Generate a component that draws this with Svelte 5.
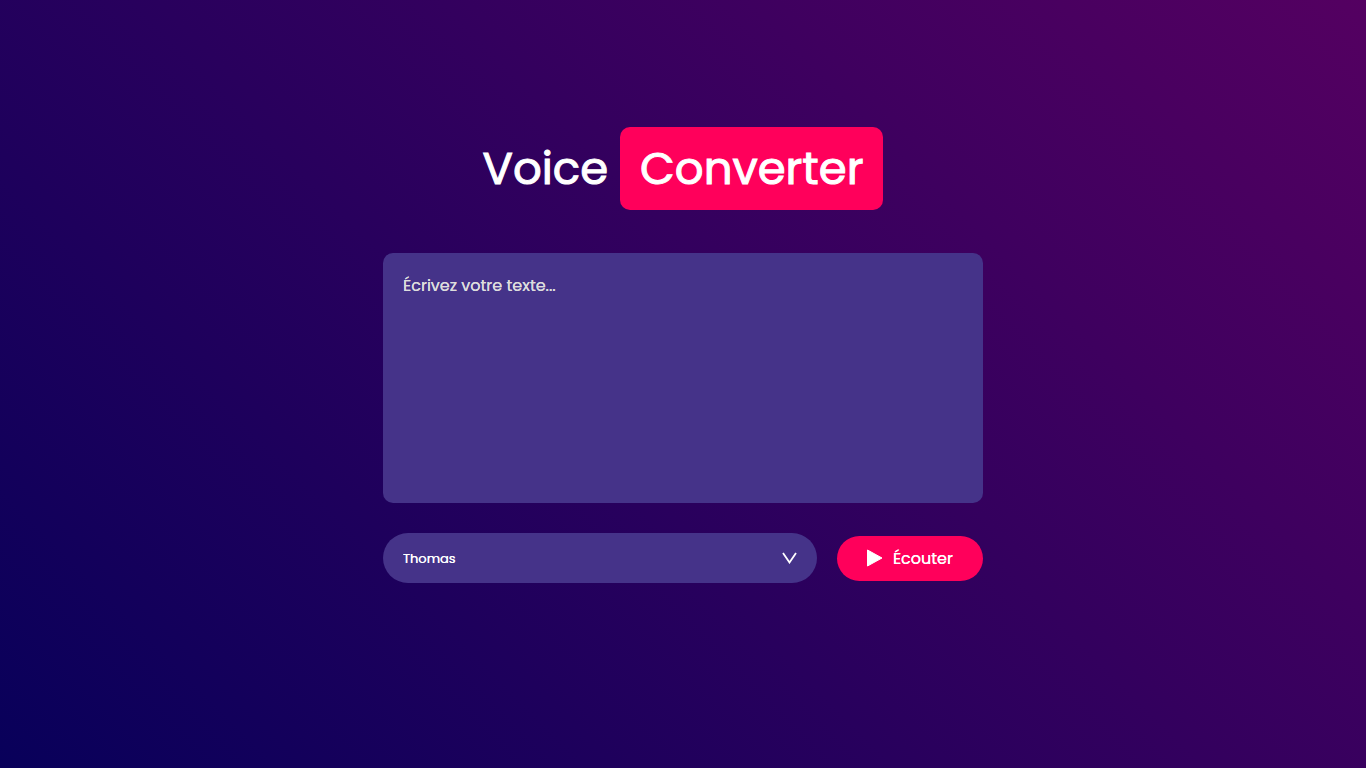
<script lang="ts">
  let text = $state('');
  let voice = $state('Thomas');
  const voices = ['Thomas', 'Amélie', 'Daniel'];

  function listen() {
    const speech = new SpeechSynthesisUtterance(text);
    speech.voice = speechSynthesis.getVoices().find((v) => v.name === voice) ?? null;
    speechSynthesis.speak(speech);
  }
</script>

<main class="hero">
  <h1>Voice <span>Converter</span></h1>
  <textarea aria-label="Texte" placeholder="Écrivez votre texte..." bind:value={text}></textarea>
  <div class="row">
    <div class="picker">
      <select aria-label="Voix" bind:value={voice}>
        {#each voices as name}
          <option>{name}</option>
        {/each}
      </select>
      <svg class="chevron" viewBox="0 0 15 12" aria-hidden="true">
        <path d="M1 1L7.5 10.5L14 1" />
      </svg>
    </div>
    <button type="button" onclick={listen}>
      <svg class="play" viewBox="0 0 16 18" aria-hidden="true">
        <path d="M0.5 1V17L15 9Z" />
      </svg>
      Écouter
    </button>
  </div>
</main>

<style>
  :global(body) {
    margin: 0;
  }

  .hero,
  .hero * {
    box-sizing: border-box;
    font-family: Poppins, Lato, sans-serif;
  }

  .hero {
    width: 100%;
    min-height: 100vh;
    padding: 20px 20px 78px;
    display: flex;
    flex-direction: column;
    align-items: center;
    justify-content: center;
    color: #fff;
    background: linear-gradient(45deg, #08005a, #540061);
  }

  h1 {
    margin: 0 0 43px;
    font-size: 45px;
    font-weight: 400;
    line-height: 67px;
    text-align: center;
    -webkit-text-stroke: 1px #fff;
  }

  h1 span {
    display: inline-block;
    padding: 8px 20px;
    border-radius: 10px;
    color: #fff;
    background: #ff005b;
  }

  textarea,
  select,
  button {
    text-shadow: 0 0 currentColor;
  }

  textarea {
    width: 100%;
    max-width: 600px;
    height: 250px;
    margin: 0 0 30px;
    padding: 20px;
    border: 0;
    outline: 0;
    border-radius: 10px;
    resize: none;
    color: #fff;
    font-size: 16px;
    line-height: 26px;
    background: #453389;
  }

  textarea::placeholder {
    color: #ddd;
  }

  .row {
    width: 100%;
    max-width: 600px;
    display: flex;
    align-items: center;
    gap: 20px;
  }

  .picker {
    flex: 1;
    display: grid;
    align-items: center;
  }

  select {
    grid-area: 1 / 1;
    width: 100%;
    height: 50px;
    padding: 0 20px;
    border: 0;
    outline: 0;
    border-radius: 50px;
    appearance: none;
    color: #fff;
    font-size: 13px;
    font-weight: 400;
    background: #453389;
  }

  .chevron {
    grid-area: 1 / 1;
    justify-self: end;
    width: 15px;
    height: 12px;
    margin-right: 20px;
    fill: none;
    stroke: #fff;
    stroke-width: 1.8;
    pointer-events: none;
  }

  button {
    display: flex;
    align-items: center;
    gap: 10px;
    padding: 10px 30px;
    border: 0;
    border-radius: 30px;
    color: #fff;
    font-size: 16px;
    line-height: 25px;
    font-weight: 400;
    background: #ff005b;
    cursor: pointer;
  }

  .play {
    width: 16px;
    height: 18px;
    fill: #fff;
    stroke: #fff;
    stroke-linejoin: round;
  }
</style>
